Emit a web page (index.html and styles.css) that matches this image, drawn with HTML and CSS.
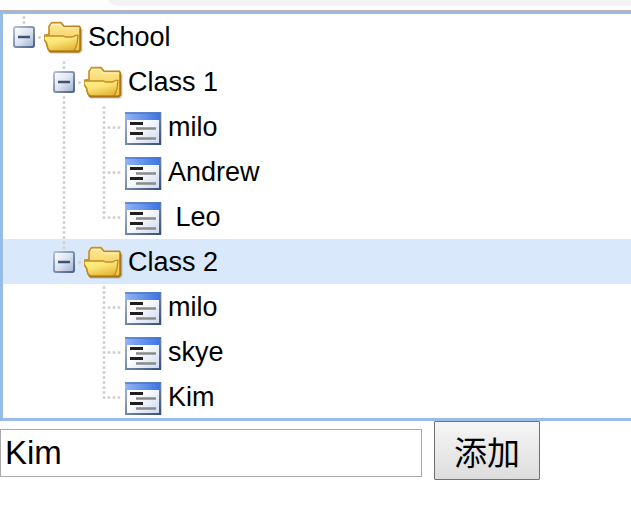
FILE: index.html
```html
<!DOCTYPE html>
<html lang="zh">
<head>
<meta charset="utf-8">
<title>School</title>
<link rel="stylesheet" href="styles.css">
</head>
<body>
<svg class="defs" aria-hidden="true">
  <defs>
    <linearGradient id="gToggle" x1="0" y1="0" x2="1" y2="1">
      <stop offset="0" stop-color="#ffffff"/><stop offset=".5" stop-color="#dde4f0"/><stop offset="1" stop-color="#9eb1d2"/>
    </linearGradient>
    <linearGradient id="gEdge" x1="0" y1="0" x2="1" y2="1">
      <stop offset="0" stop-color="#b4c0d6"/><stop offset="1" stop-color="#4c6488"/>
    </linearGradient>
    <linearGradient id="gBack" x1="0" y1="0" x2="0" y2="1">
      <stop offset="0" stop-color="#ffeb9a"/><stop offset="1" stop-color="#f0c040"/>
    </linearGradient>
    <linearGradient id="gFront" x1="0" y1="0" x2=".5" y2="1">
      <stop offset="0" stop-color="#fff890"/><stop offset=".5" stop-color="#fbe474"/><stop offset="1" stop-color="#e6b83c"/>
    </linearGradient>
    <linearGradient id="gRim" x1="0" y1="0" x2="1" y2="1">
      <stop offset="0" stop-color="#d29430"/><stop offset="1" stop-color="#a87408"/>
    </linearGradient>
    <linearGradient id="gBar" x1="0" y1="0" x2="1" y2="0">
      <stop offset="0" stop-color="#8fb2f4"/><stop offset="1" stop-color="#3c74e4"/>
    </linearGradient>
    <linearGradient id="gPage" x1="0" y1="0" x2="1" y2="1">
      <stop offset=".4" stop-color="#ffffff"/><stop offset="1" stop-color="#cbd7ee"/>
    </linearGradient>
    <linearGradient id="gFrame" x1="0" y1="0" x2="1" y2="1">
      <stop offset="0" stop-color="#a9bddd"/><stop offset="1" stop-color="#3a5078"/>
    </linearGradient>
  </defs>
  <symbol id="minus" viewBox="0 0 24 24">
    <rect x="2" y="2" width="21" height="21" rx="2" fill="#8b98ad" opacity=".4"/>
    <rect x="2" y="2" width="20" height="20" rx="2" fill="url(#gToggle)" stroke="url(#gEdge)" stroke-width="2"/>
    <path d="M6 12h12" stroke="#3c5470" stroke-width="2.5"/>
  </symbol>
  <symbol id="folder" viewBox="132 42 120 135">
    <path d="M150 158h90l5-6V88" fill="none" stroke="#808080" stroke-width="5" opacity=".4"/>
    <path d="M147 104V79l8-11h28l9 11h46l3 4v67l-5 5h-84l-8-8-5-19-7-10v-12z" fill="url(#gBack)" stroke="url(#gRim)" stroke-width="5"/>
    <path d="M153 74h28l10 10h44" fill="none" stroke="#fff6cc" stroke-width="3"/>
    <path d="M133 106l5 2h52l7 3h20l10-5h7l-3 25-6 17-6 6h-66l-9-8-4-17-8-12z" fill="url(#gFront)" stroke="#c48c20" stroke-width="4"/>
    <path d="M146 154h90l5-5V86" fill="none" stroke="#a87612" stroke-width="5"/>
  </symbol>
  <symbol id="leaf" viewBox="0 0 40 45">
    <rect x="1" y="8" width="37" height="33" rx="1" fill="#9aa8c0" opacity=".5"/>
    <rect x="2" y="9" width="34" height="31" fill="url(#gPage)" stroke="url(#gFrame)" stroke-width="2"/>
    <rect x="2" y="9" width="34" height="7" fill="url(#gBar)"/>
    <path d="M1 9h36" stroke="#3f70d2" stroke-width="2" opacity=".6"/>
    <path d="M6 19.500h13M6 29.500h13" stroke="#202020" stroke-width="3"/>
    <path d="M12 24.500h20M12 34.500h20" stroke="#8b8b8b" stroke-width="2.500"/>
  </symbol>
  <symbol id="above" viewBox="0 0 40 45"><path class="dots" d="M20 3.500v6"/></symbol>
  <symbol id="below" viewBox="0 0 40 45"><path class="dots" d="M20 38.500v6"/></symbol>
  <symbol id="beside" viewBox="0 0 40 45"><path class="dots" d="M35.500 23.500h1"/></symbol>
  <symbol id="line" viewBox="0 0 40 45"><path class="dots" d="M20 3.500v41"/></symbol>
  <symbol id="tee" viewBox="0 0 40 45"><path class="dots" d="M20 3.500v41M25 23.500h11"/></symbol>
  <symbol id="elbow" viewBox="0 0 40 45"><path class="dots" d="M20 3.500v21M25 23.500h11"/></symbol>
</svg>

<div class="browser-edge"><div class="address"></div></div>

<main>
  <ul class="tree">
    <li>
      <div class="row">
        <span class="cell"><svg class="guide"><use href="#above"/><use href="#beside"/></svg><button class="toggle" type="button" aria-label="School"><svg><use href="#minus"/></svg></button></span>
        <svg class="icon"><use href="#folder"/></svg><span class="label">School</span>
      </div>
      <ul>
        <li>
          <div class="row">
            <span class="cell"></span>
            <span class="cell"><svg class="guide"><use href="#above"/><use href="#below"/><use href="#beside"/></svg><button class="toggle" type="button" aria-label="Class 1"><svg><use href="#minus"/></svg></button></span>
            <svg class="icon"><use href="#folder"/></svg><span class="label">Class 1</span>
          </div>
          <ul>
            <li class="row"><span class="cell"></span><svg class="cell"><use href="#line"/></svg><svg class="cell"><use href="#tee"/></svg><svg class="icon"><use href="#leaf"/></svg><span class="label">milo</span></li>
            <li class="row"><span class="cell"></span><svg class="cell"><use href="#line"/></svg><svg class="cell"><use href="#tee"/></svg><svg class="icon"><use href="#leaf"/></svg><span class="label">Andrew</span></li>
            <li class="row"><span class="cell"></span><svg class="cell"><use href="#line"/></svg><svg class="cell"><use href="#elbow"/></svg><svg class="icon"><use href="#leaf"/></svg><span class="label"> Leo</span></li>
          </ul>
        </li>
        <li>
          <div class="row selected">
            <span class="cell"></span>
            <span class="cell"><svg class="guide"><use href="#above"/><use href="#beside"/></svg><button class="toggle" type="button" aria-label="Class 2"><svg><use href="#minus"/></svg></button></span>
            <svg class="icon"><use href="#folder"/></svg><span class="label">Class 2</span>
          </div>
          <ul>
            <li class="row"><span class="cell"></span><span class="cell"></span><svg class="cell"><use href="#tee"/></svg><svg class="icon"><use href="#leaf"/></svg><span class="label">milo</span></li>
            <li class="row"><span class="cell"></span><span class="cell"></span><svg class="cell"><use href="#tee"/></svg><svg class="icon"><use href="#leaf"/></svg><span class="label">skye</span></li>
            <li class="row"><span class="cell"></span><span class="cell"></span><svg class="cell"><use href="#elbow"/></svg><svg class="icon"><use href="#leaf"/></svg><span class="label">Kim</span></li>
          </ul>
        </li>
      </ul>
    </li>
  </ul>
  <form class="add-form">
    <input class="name" type="text" value="Kim" aria-label="Name">
    <button class="add" type="button">添加</button>
  </form>
</main>
</body>
</html>
```
FILE: styles.css
```css
* { box-sizing: border-box; }

body {
  margin: 0;
  background: #fff;
  color: #000;
  font-family: "Liberation Sans", "Noto Sans CJK SC", sans-serif;
  font-size: 27px;
}

.defs { position: absolute; width: 0; height: 0; }

.browser-edge {
  height: 11px;
  border-bottom: 1px solid #b5b3b5;
}

.address {
  height: 6px;
  margin-left: 108px;
  background: #f1f3f4;
  border-bottom-left-radius: 14px 6px;
}

ul { margin: 0; padding: 0; list-style: none; }

.tree {
  border: 3px solid #99bbe8;
  border-right: 0;
}

.row {
  display: flex;
  height: 45px;
  padding-left: 1px;
  line-height: 47px;
}

.tree > li > ul > li:last-child > ul > li:last-child { height: 44px; }

.selected { background: #d9e8fb; }

.cell, .icon {
  flex: none;
  width: 40px;
  height: 45px;
}

span.cell {
  display: grid;
  place-items: center;
}

.guide, .toggle { grid-area: 1 / 1; }

.guide { width: 40px; height: 45px; }

.toggle {
  width: 24px;
  height: 24px;
  padding: 0;
  border: 0;
  background: none;
}

.toggle svg { display: block; width: 24px; height: 24px; }

.dots {
  fill: none;
  stroke: #d0d0d0;
  stroke-width: 3;
  stroke-linecap: round;
  stroke-dasharray: 0 5;
}

.label { margin-left: 4px; white-space: pre; }

.add-form {
  display: flex;
  align-items: flex-end;
  gap: 12px;
}

.name {
  width: 422px;
  height: 48px;
  margin: 0 0 3px;
  padding: 0 4px;
  border: 1px solid #a9a9a9;
  background: #fff;
  color: #000;
  font: 33px "Liberation Sans", sans-serif;
}

.add {
  height: 59px;
  padding: 0 19px;
  border: 1px solid #707070;
  border-radius: 1px;
  background: linear-gradient(#f6f6f6, #dddddd);
  color: #000;
  font: 33px "Noto Sans CJK SC", sans-serif;
  line-height: 54px;
}
```
